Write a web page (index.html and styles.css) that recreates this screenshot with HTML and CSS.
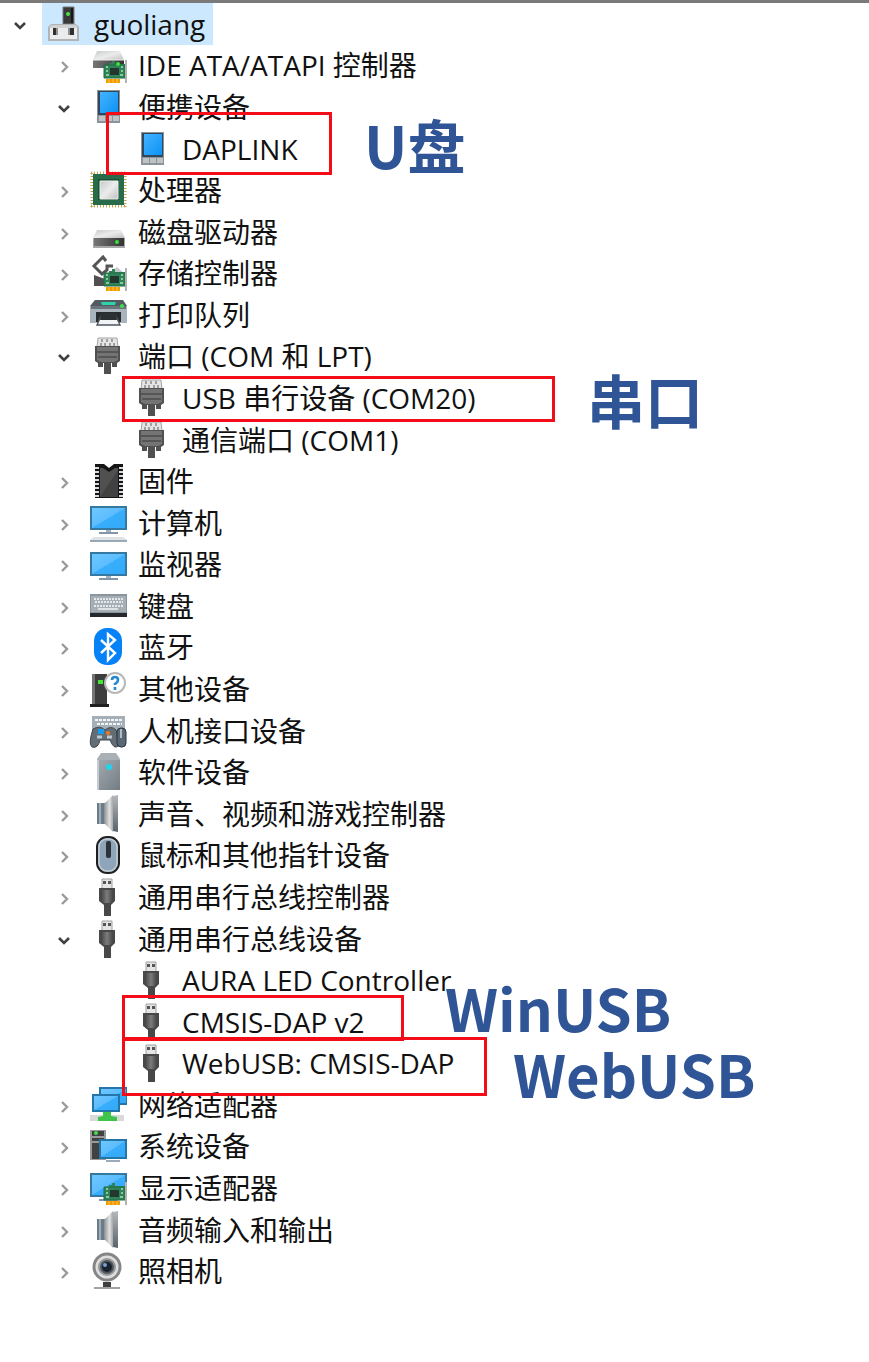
FILE: index.html
```
<!DOCTYPE html>
<html lang="zh-CN">
<head>
    <meta charset="UTF-8">
    <meta name="viewport" content="width=device-width, initial-scale=1">
    <title>guoliang</title>
    <link rel="stylesheet" href="styles.css">
</head>
<body>
    <svg class="sprite" aria-hidden="true">
        <defs>
            <linearGradient id="blue" x1="0" y1="0" x2="1" y2="1">
                <stop offset="0" stop-color="#6fc8ff"/>
                <stop offset=".5" stop-color="#5cbcff"/>
                <stop offset=".5" stop-color="#38aefc"/>
                <stop offset="1" stop-color="#32a9fa"/>
            </linearGradient>
            <linearGradient id="device" x1="0" y1="0" x2="1" y2="1">
                <stop offset="0" stop-color="#45b2ff"/>
                <stop offset="1" stop-color="#0c93f5"/>
            </linearGradient>
            <linearGradient id="silver" x1="0" y1="0" x2="1" y2="1">
                <stop offset="0" stop-color="#c5c8ca"/>
                <stop offset=".5" stop-color="#ececec"/>
                <stop offset="1" stop-color="#bfc0c2"/>
            </linearGradient>
            <linearGradient id="dark" x1="0" y1="0" x2="1" y2="0">
                <stop offset="0" stop-color="#777"/>
                <stop offset="1" stop-color="#333"/>
            </linearGradient>
            <linearGradient id="plug" x1="0" y1="0" x2="1" y2="0">
                <stop offset="0" stop-color="#444"/>
                <stop offset=".5" stop-color="#7c7c7c"/>
                <stop offset="1" stop-color="#444"/>
            </linearGradient>
            <linearGradient id="steel" x1="0" y1="0" x2="1" y2="1">
                <stop offset="0" stop-color="#a3abb1"/>
                <stop offset="1" stop-color="#747d84"/>
            </linearGradient>
            <linearGradient id="cone" x1="0" y1="0" x2="1" y2="0">
                <stop offset="0" stop-color="#8b8e90"/>
                <stop offset=".6" stop-color="#dfe1e2"/>
                <stop offset="1" stop-color="#a6a9ab"/>
            </linearGradient>
            <linearGradient id="rim" x1="0" y1="0" x2="0" y2="1">
                <stop offset="0" stop-color="#b5b9bc"/>
                <stop offset="1" stop-color="#59626a"/>
            </linearGradient>
        </defs>

        <symbol id="chevron-right" viewBox="0 0 20 20">
            <path d="M8 7l5 5-5 5" fill="none" stroke="#9a9a9a" stroke-width="2.4"/>
        </symbol>
        <symbol id="chevron-down" viewBox="0 0 20 20">
            <path d="M5 9l5 5 5-5" fill="none" stroke="#404040" stroke-width="2.6"/>
        </symbol>

        <!-- expansion card, shared by several icons -->
        <symbol id="card" viewBox="0 0 24 24">
            <path d="M1 5h5V3h3V1h3v3h10v14H1z" fill="#2e8457"/>
            <path d="M1 5h21v13H1z" fill="none" stroke="#246b46"/>
            <path d="M7 8h9v7H7z" fill="#24372f"/>
            <path d="M3 7h2M18 7h2M3 11h2M18 11h2M3 15h3M17 15h3" stroke="#a5dfbc" stroke-width="1.4"/>
            <path d="M3 19h14v4H3z" fill="#f29b00"/>
            <path d="M6 19v4M10 19v4M14 19v4" stroke="#ffc64b"/>
            <path d="M22 0h2v23h-2z" fill="#b2b2b2"/>
        </symbol>

        <symbol id="i-root" viewBox="0 0 38 38">
            <path d="M18 2h11v17H18z" fill="#393939" stroke="#777"/>
            <path d="M27 3v15" stroke="#171717" stroke-width="2"/>
            <circle cx="23" cy="9" r="2" fill="#46e34d"/>
            <path d="M6 19h25l3 3v14H3V22z" fill="#b0b4b7"/>
            <path d="M6 20h25l2 3H4z" fill="#cfd1d2"/>
            <path d="M5 23h27v11H5z" fill="#ececec"/>
            <path d="M8 23h5v7H8zM24 23h5v7h-5z" fill="#303030"/>
            <path d="M12 23v7M24 23v7" stroke="#919191" stroke-width="2"/>
        </symbol>

        <symbol id="i-ide" viewBox="0 0 38 38">
            <path d="M8 5h23l4 9H4z" fill="url(#silver)"/>
            <path d="M4 14h31v8H4z" fill="url(#dark)"/>
            <path d="M4 14h31" stroke="#f0f0f0"/>
            <use href="#card" x="14" y="14" width="24" height="24"/>
            <circle cx="29" cy="18" r="2" fill="#39e339"/>
        </symbol>

        <symbol id="i-portable" viewBox="0 0 38 38">
            <path d="M8 2h23v33H8z" fill="#8c949a"/>
            <path d="M9 3h21v24H9z" fill="#30485a"/>
            <path d="M11 4h18v21H11z" fill="url(#device)"/>
            <path d="M10 28h6v5h-6zM17 28h6v5h-6zM24 28h6v5h-6z" fill="#bdc3c7"/>
        </symbol>

        <symbol id="i-cpu" viewBox="0 0 38 38">
            <path d="M2 2h34M2 35h34" stroke="#c4a455" stroke-width="3" stroke-dasharray="1 2"/>
            <path d="M3 2v34M36 2v34" stroke="#c4a455" stroke-width="3" stroke-dasharray="1 2"/>
            <path d="M4 3h31v31H4z" fill="#286b4a"/>
            <path d="M9 8h21v21H9z" fill="#1a5137"/>
            <path d="M11 10h18v18H11z" fill="url(#silver)" stroke="#ecefe9"/>
        </symbol>

        <symbol id="i-disk" viewBox="0 0 38 38">
            <path d="M8 17h24l4 8H4z" fill="url(#silver)"/>
            <path d="M4 25h32v10H4z" fill="#a6a8aa"/>
            <path d="M5 25h30v8H5z" fill="url(#dark)"/>
            <circle cx="28" cy="29" r="2" fill="#3cde38"/>
        </symbol>

        <symbol id="i-storage" viewBox="0 0 38 38">
            <path d="M17 7l-3-4-9 9 8 8 5-4v-4h6" fill="none" stroke="#555" stroke-width="3"/>
            <path d="M5 21l11 4v7H5z" fill="#505050"/>
            <path d="M20 20l8-7 8 7z" fill="#c3c8c8"/>
            <use href="#card" x="14" y="14" width="24" height="24"/>
        </symbol>

        <symbol id="i-printer" viewBox="0 0 38 38">
            <path d="M6 4h28l4 6H1z" fill="#525b61"/>
            <path d="M12 6h15l-1 3H13z" fill="#2ed3ac"/>
            <path d="M1 10h37v17H1z" fill="#a9b4bd"/>
            <path d="M2 10h35v3H2z" fill="#69747c"/>
            <path d="M7 16h25v10H7z" fill="#272c30"/>
            <path d="M12 20h15l4 9H8z" fill="#f1f3f4" stroke="#4e565b" stroke-width="1.4"/>
            <path d="M12 17h15l1 7H11z" fill="#2c3033"/>
            <circle cx="33" cy="10" r="2" fill="#3de349"/>
        </symbol>

        <symbol id="i-port" viewBox="0 0 38 38">
            <path d="M9 1h19l1 9H8z" fill="#e4e4e4" stroke="#a5a5a5"/>
            <path d="M13 2v3M18 2v3M23 2v3M12 6v3M16 6v3M21 6v3M25 6v3" stroke="#888" stroke-width="1.5"/>
            <path d="M6 9h25v15l-3 2v4h-5v-4h-1v11h-7V26h-1v4H9v-4l-3-2z" fill="#505050"/>
            <path d="M8 10h21v13l-4 2H12l-4-2z" fill="#747474"/>
            <path d="M8 15h21M9 20h19" stroke="#555" stroke-width="2"/>
        </symbol>

        <symbol id="i-firmware" viewBox="0 0 38 38">
            <path d="M6 2h9l5 4 5-4h9v34H6z" fill="#151515"/>
            <path d="M11 6h3l6 4 6-4h3v29H11z" fill="#505050"/>
            <path d="M11 35L29 8v27z" fill="#414141"/>
            <path d="M8 5v30M32 5v30" stroke="#d7dae1" stroke-width="4" stroke-dasharray="2 2"/>
        </symbol>

        <symbol id="screen" viewBox="0 0 38 30">
            <path d="M1 0h37v24H1z" fill="#3679a0"/>
            <path d="M3 2h33v20H3z" fill="url(#blue)"/>
            <path d="M17 24h5v2h-5z" fill="#a3b1bf"/>
            <path d="M10 26h19v2H10z" fill="#8296a9"/>
        </symbol>

        <symbol id="i-computer" viewBox="0 0 38 38">
            <use href="#screen" x="0" y="2" width="38" height="30"/>
            <path d="M5 33h29l4 3H1z" fill="#dce2e6"/>
            <path d="M1 36h37v2H1z" fill="#98a8b5"/>
        </symbol>

        <symbol id="i-monitor" viewBox="0 0 38 38">
            <use href="#screen" x="0" y="7" width="38" height="30"/>
        </symbol>

        <symbol id="i-keyboard" viewBox="0 0 38 38">
            <path d="M1 7h37v23H1z" fill="#8b959e"/>
            <path d="M2 9h35v16H2z" fill="#a7afb6"/>
            <path d="M5 12h30M5 19h30" stroke="#e6e9eb" stroke-width="2" stroke-dasharray="2 1"/>
            <path d="M6 15h28" stroke="#e6e9eb" stroke-width="2" stroke-dasharray="2 1"/>
            <path d="M9 22h20" stroke="#dfe2e5" stroke-width="2"/>
            <path d="M1 26h37v4H1z" fill="#25292d"/>
        </symbol>

        <symbol id="i-bluetooth" viewBox="0 0 38 38">
            <rect x="5" y="0" width="28" height="37" rx="13" fill="#0582f8"/>
            <path d="M12 12l14 13-7 7V6l7 6-14 13" fill="none" stroke="#fff" stroke-width="2.4"/>
        </symbol>

        <symbol id="i-other" viewBox="0 0 38 38">
            <path d="M3 4h15v30H3z" fill="#3d3d3d"/>
            <path d="M3 4h3v30H3z" fill="#747474"/>
            <path d="M1 34h19v3H1z" fill="#202020"/>
            <path d="M9 10h5v4H9z" fill="#42e72f"/>
            <circle cx="26" cy="13" r="10" fill="#fff" stroke="#b7b7b7" stroke-width="2"/>
            <path d="M23 10q0-3 3-3t3 3q0 2-3 4v1M26 17v3" fill="none" stroke="#2488d1" stroke-width="2.6"/>
        </symbol>

        <symbol id="i-hid" viewBox="0 0 38 38">
            <path d="M3 4h33v20H3z" fill="#a4afb7"/>
            <path d="M6 8h27M8 12h25" stroke="#f4f5f6" stroke-width="2" stroke-dasharray="3 1"/>
            <path d="M4 17q7-4 12 1 6-5 11 0 3 7 2 16-4 4-8-6H11q-2 9-8 7-4-3 1-18z" fill="#626d75" stroke="#3f4a53"/>
            <path d="M9 17h6v5H9z" fill="#189cf4"/>
            <circle cx="19" cy="21" r="2" fill="#f17722"/>
            <path d="M8 25h5M18 25h5" stroke="#bdc8d0" stroke-width="3"/>
            <rect x="28" y="16" width="9" height="19" rx="4" fill="#596874" stroke="#29343d"/>
            <path d="M32 17v9" stroke="#b0bdc7" stroke-width="2"/>
        </symbol>

        <symbol id="i-software" viewBox="0 0 38 38">
            <path d="M12 0h15l4 6v31H8V6z" fill="#a9b1b7"/>
            <path d="M8 7h23v30H8z" fill="url(#steel)"/>
            <path d="M9 7v30" stroke="#c5cbd0" stroke-width="2"/>
            <circle cx="20" cy="14" r="3" fill="#20d4eb"/>
        </symbol>

        <symbol id="i-speaker" viewBox="0 0 38 38">
            <path d="M8 8h8v21H8z" fill="#6b7b87"/>
            <path d="M10 8h2v21h-2z" fill="#9fadb8"/>
            <path d="M15 9L24 0v37l-9-9z" fill="url(#cone)"/>
            <path d="M24 1l5-1v37l-5-1z" fill="url(#rim)"/>
        </symbol>

        <symbol id="i-mouse" viewBox="0 0 38 38">
            <rect x="8" y="1" width="22" height="36" rx="10" fill="#8fa5ba" stroke="#1d1f21" stroke-width="2"/>
            <rect x="10" y="3" width="18" height="32" rx="8" fill="none" stroke="#c3ccd4" stroke-width="1.5"/>
            <rect x="17" y="5" width="5" height="17" rx="2" fill="#2c3339"/>
        </symbol>

        <symbol id="i-usb" viewBox="0 0 38 38">
            <path d="M13 1h10v10H13z" fill="#e4e4e4" stroke="#a0a0a0"/>
            <path d="M14 3h3v3h-3zM19 3h3v3h-3z" fill="#555"/>
            <path d="M10 10h16v13l-4 4v11h-7V27l-5-4z" fill="#484848"/>
            <path d="M12 12h12v10l-3 3h-6l-3-3z" fill="url(#plug)"/>
        </symbol>

        <symbol id="i-network" viewBox="0 0 38 38">
            <path d="M10 1h28v18H10z" fill="#2475a8"/>
            <path d="M12 3h25v14H12z" fill="url(#blue)"/>
            <path d="M3 8h28v18H3z" fill="#2475a8"/>
            <path d="M5 10h24v14H5z" fill="url(#blue)"/>
            <path d="M1 29h34v6H1z" fill="#d9d9d9"/>
            <path d="M14 26h8v4l6 1v4H9v-4l5-1z" fill="#3fc44b"/>
        </symbol>

        <symbol id="i-system" viewBox="0 0 38 38">
            <path d="M1 3h16v30H1z" fill="#9a9a9a"/>
            <path d="M3 4h12v28H3z" fill="#414141"/>
            <path d="M3 10h12M3 15h12" stroke="#999" stroke-width="2"/>
            <circle cx="7" cy="6" r="2" fill="#43df46"/>
            <path d="M10 12h28v20H10z" fill="#2475a8"/>
            <path d="M12 14h24v16H12z" fill="url(#blue)"/>
            <path d="M17 34h14" stroke="#9babbb" stroke-width="2"/>
        </symbol>

        <symbol id="i-display" viewBox="0 0 38 38">
            <use href="#screen" x="0" y="4" width="38" height="30"/>
            <use href="#card" x="14" y="13" width="24" height="24"/>
        </symbol>

        <symbol id="i-camera" viewBox="0 0 38 38">
            <circle cx="18" cy="15" r="13" fill="#dedede" stroke="#858585" stroke-width="3"/>
            <circle cx="18" cy="15" r="8" fill="#4f5861" stroke="#999" stroke-width="2"/>
            <circle cx="18" cy="15" r="5" fill="#18222d"/>
            <circle cx="16" cy="13" r="2" fill="#799fd0"/>
            <path d="M14 30h8v5h-8z" fill="#3f3f3f"/>
            <path d="M5 36h26" stroke="#a2a2a2" stroke-width="2"/>
        </symbol>
    </svg>

    <main class="window">
        <ul class="tree">
            <li>
                <div class="row root">
                    <button class="toggle" aria-label="折叠" aria-expanded="true"><svg><use href="#chevron-down"/></svg></button>
                    <span class="item selected"><svg><use href="#i-root"/></svg>guoliang</span>
                </div>
                <ul>
                    <li><div class="row"><button class="toggle" aria-label="展开"><svg><use href="#chevron-right"/></svg></button><span class="item"><svg><use href="#i-ide"/></svg>IDE ATA/ATAPI 控制器</span></div></li>
                    <li>
                        <div class="row"><button class="toggle" aria-label="折叠" aria-expanded="true"><svg><use href="#chevron-down"/></svg></button><span class="item"><svg><use href="#i-portable"/></svg>便携设备</span></div>
                        <ul>
                            <li><div class="row child"><span class="item"><svg><use href="#i-portable"/></svg>DAPLINK</span><span class="box box-disk"></span><strong class="note note-disk">U盘</strong></div></li>
                        </ul>
                    </li>
                    <li><div class="row"><button class="toggle" aria-label="展开"><svg><use href="#chevron-right"/></svg></button><span class="item"><svg><use href="#i-cpu"/></svg>处理器</span></div></li>
                    <li><div class="row"><button class="toggle" aria-label="展开"><svg><use href="#chevron-right"/></svg></button><span class="item"><svg><use href="#i-disk"/></svg>磁盘驱动器</span></div></li>
                    <li><div class="row"><button class="toggle" aria-label="展开"><svg><use href="#chevron-right"/></svg></button><span class="item"><svg><use href="#i-storage"/></svg>存储控制器</span></div></li>
                    <li><div class="row"><button class="toggle" aria-label="展开"><svg><use href="#chevron-right"/></svg></button><span class="item"><svg><use href="#i-printer"/></svg>打印队列</span></div></li>
                    <li>
                        <div class="row"><button class="toggle" aria-label="折叠" aria-expanded="true"><svg><use href="#chevron-down"/></svg></button><span class="item"><svg><use href="#i-port"/></svg>端口 (COM 和 LPT)</span></div>
                        <ul>
                            <li><div class="row child"><span class="item"><svg><use href="#i-port"/></svg>USB 串行设备 (COM20)</span><span class="box box-serial"></span><strong class="note note-serial">串口</strong></div></li>
                            <li><div class="row child"><span class="item"><svg><use href="#i-port"/></svg>通信端口 (COM1)</span></div></li>
                        </ul>
                    </li>
                    <li><div class="row"><button class="toggle" aria-label="展开"><svg><use href="#chevron-right"/></svg></button><span class="item"><svg><use href="#i-firmware"/></svg>固件</span></div></li>
                    <li><div class="row"><button class="toggle" aria-label="展开"><svg><use href="#chevron-right"/></svg></button><span class="item"><svg><use href="#i-computer"/></svg>计算机</span></div></li>
                    <li><div class="row"><button class="toggle" aria-label="展开"><svg><use href="#chevron-right"/></svg></button><span class="item"><svg><use href="#i-monitor"/></svg>监视器</span></div></li>
                    <li><div class="row"><button class="toggle" aria-label="展开"><svg><use href="#chevron-right"/></svg></button><span class="item"><svg><use href="#i-keyboard"/></svg>键盘</span></div></li>
                    <li><div class="row"><button class="toggle" aria-label="展开"><svg><use href="#chevron-right"/></svg></button><span class="item"><svg><use href="#i-bluetooth"/></svg>蓝牙</span></div></li>
                    <li><div class="row"><button class="toggle" aria-label="展开"><svg><use href="#chevron-right"/></svg></button><span class="item"><svg><use href="#i-other"/></svg>其他设备</span></div></li>
                    <li><div class="row"><button class="toggle" aria-label="展开"><svg><use href="#chevron-right"/></svg></button><span class="item"><svg><use href="#i-hid"/></svg>人机接口设备</span></div></li>
                    <li><div class="row"><button class="toggle" aria-label="展开"><svg><use href="#chevron-right"/></svg></button><span class="item"><svg><use href="#i-software"/></svg>软件设备</span></div></li>
                    <li><div class="row"><button class="toggle" aria-label="展开"><svg><use href="#chevron-right"/></svg></button><span class="item"><svg><use href="#i-speaker"/></svg>声音、视频和游戏控制器</span></div></li>
                    <li><div class="row"><button class="toggle" aria-label="展开"><svg><use href="#chevron-right"/></svg></button><span class="item"><svg><use href="#i-mouse"/></svg>鼠标和其他指针设备</span></div></li>
                    <li><div class="row"><button class="toggle" aria-label="展开"><svg><use href="#chevron-right"/></svg></button><span class="item"><svg><use href="#i-usb"/></svg>通用串行总线控制器</span></div></li>
                    <li>
                        <div class="row"><button class="toggle" aria-label="折叠" aria-expanded="true"><svg><use href="#chevron-down"/></svg></button><span class="item"><svg><use href="#i-usb"/></svg>通用串行总线设备</span></div>
                        <ul>
                            <li><div class="row child"><span class="item"><svg><use href="#i-usb"/></svg>AURA LED Controller</span></div></li>
                            <li><div class="row child"><span class="item"><svg><use href="#i-usb"/></svg>CMSIS-DAP v2</span><span class="box box-winusb"></span><strong class="note note-winusb">WinUSB</strong></div></li>
                            <li><div class="row child"><span class="item"><svg><use href="#i-usb"/></svg>WebUSB: CMSIS-DAP</span><span class="box box-webusb"></span><strong class="note note-webusb">WebUSB</strong></div></li>
                        </ul>
                    </li>
                    <li><div class="row"><button class="toggle" aria-label="展开"><svg><use href="#chevron-right"/></svg></button><span class="item"><svg><use href="#i-network"/></svg>网络适配器</span></div></li>
                    <li><div class="row"><button class="toggle" aria-label="展开"><svg><use href="#chevron-right"/></svg></button><span class="item"><svg><use href="#i-system"/></svg>系统设备</span></div></li>
                    <li><div class="row"><button class="toggle" aria-label="展开"><svg><use href="#chevron-right"/></svg></button><span class="item"><svg><use href="#i-display"/></svg>显示适配器</span></div></li>
                    <li><div class="row"><button class="toggle" aria-label="展开"><svg><use href="#chevron-right"/></svg></button><span class="item"><svg><use href="#i-speaker"/></svg>音频输入和输出</span></div></li>
                    <li><div class="row"><button class="toggle" aria-label="展开"><svg><use href="#chevron-right"/></svg></button><span class="item"><svg><use href="#i-camera"/></svg>照相机</span></div></li>
                </ul>
            </li>
        </ul>
    </main>
</body>
</html>
```
FILE: styles.css
```
* {
    box-sizing: border-box;
}

body {
    margin: 0;
    background: #fff;
    color: #111;
    font-family: "Open Sans", "Noto Sans CJK SC", sans-serif;
    font-size: 28px;
    line-height: 40px;
}

.sprite {
    position: absolute;
    width: 0;
    height: 0;
}

.window {
    min-height: 100vh;
    display: flex;
    flex-direction: column;
    border-top: 3px solid #7a7a7a;
    padding-bottom: 70px;
}

/* every row of the tree, whatever its depth, is one row of this grid */
.tree {
    flex: 1;
    display: grid;
    grid-auto-rows: minmax(40px, 1fr);
    margin: 0;
    padding: 0;
}

.tree ul,
.tree li {
    display: contents;
}

.row {
    position: relative;
    display: flex;
    align-items: center;
    gap: 12px;
    padding-left: 54px;
    white-space: nowrap;
}

.row.root {
    padding-left: 10px;
}

.row.child {
    padding-left: 130px;
}

.toggle {
    width: 20px;
    height: 20px;
    padding: 0;
    border: 0;
    background: none;
    cursor: pointer;
}

.toggle svg {
    display: block;
    width: 20px;
    height: 20px;
}

.item {
    display: flex;
    align-items: center;
    align-self: stretch;
    gap: 11px;
    padding: 0 8px 0 3px;
}

.item svg {
    width: 38px;
    height: 38px;
}

.selected {
    background: #cce8ff;
}

/* red frames and blue notes drawn over the tree */
.box {
    position: absolute;
    z-index: 1;
    border: 3px solid #f20d18;
}

.box-disk {
    top: -16px;
    left: 106px;
    width: 226px;
    height: 63px;
}

.box-serial {
    top: -1px;
    left: 122px;
    width: 433px;
    height: 46px;
}

.box-winusb {
    top: -6px;
    left: 122px;
    width: 282px;
    height: 46px;
}

.box-webusb {
    top: -6px;
    left: 122px;
    width: 365px;
    height: 59px;
}

.note {
    position: absolute;
    z-index: 1;
    color: #2f5597;
    font-family: "Noto Sans CJK SC", sans-serif;
    font-size: 58px;
    font-weight: 700;
    line-height: 60px;
}

.note-disk {
    top: -14px;
    left: 364px;
}

.note-serial {
    top: -8px;
    left: 587px;
}

.note-winusb {
    top: -24px;
    left: 445px;
}

.note-webusb {
    top: 0;
    left: 513px;
}
```
